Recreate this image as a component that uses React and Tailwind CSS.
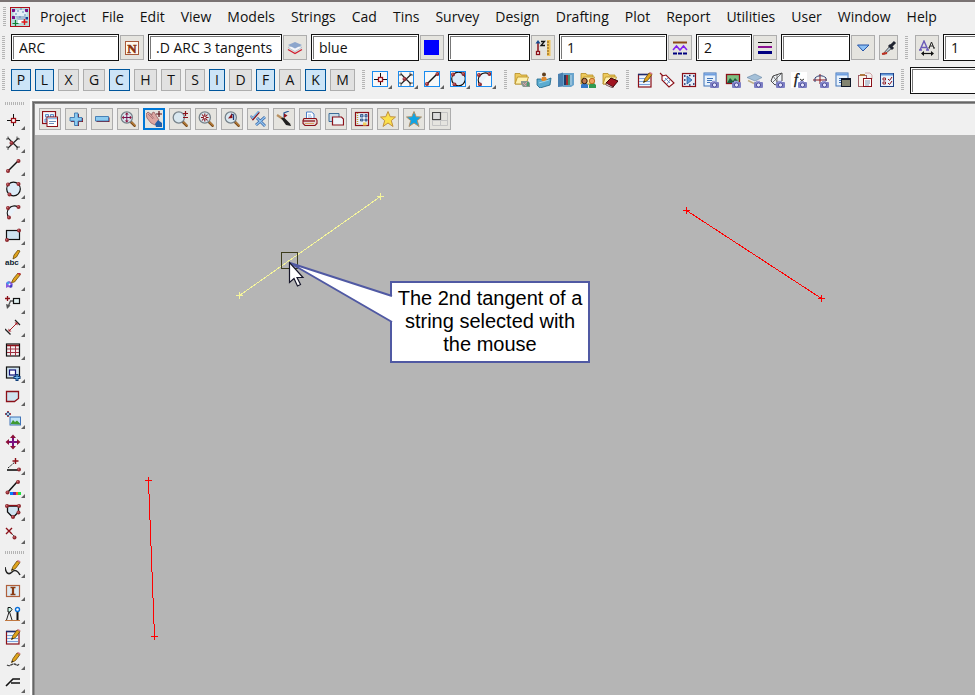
import clsx from 'clsx'

const MENUS = [
  'Project', 'File', 'Edit', 'View', 'Models', 'Strings', 'Cad', 'Tins', 'Survey',
  'Design', 'Drafting', 'Plot', 'Report', 'Utilities', 'User', 'Window', 'Help',
]

const SNAPS = [
  { key: 'P', width: 'w-5', on: true },
  { key: 'L', width: 'w-[19px]', on: true },
  { key: 'X', width: 'w-[21px]' },
  { key: 'G', width: 'w-[22px]' },
  { key: 'C', width: 'w-[21px]', on: true },
  { key: 'H', width: 'w-[23px]' },
  { key: 'T', width: 'w-5' },
  { key: 'S', width: 'w-5' },
  { key: 'I', width: 'w-4', on: true },
  { key: 'D', width: 'w-[23px]' },
  { key: 'F', width: 'w-[19px]', on: true },
  { key: 'A', width: 'w-[22px]' },
  { key: 'K', width: 'w-[21px]', on: true },
  { key: 'M', width: 'w-[25px]' },
]

const RED = '#8b1018'
const PALE = '#cfe3f0'

const Ball = ({ x, y }) => (
  <>
    <circle cx={x} cy={y} r="2" fill="#8e2a30" />
    <circle cx={x - 0.4} cy={y - 0.4} r="0.8" fill="#d07078" />
  </>
)

const Pencil = () => (
  <>
    <path d="M6.5 10.5 8 6.5 12 1l3 1.5-4.5 6z" fill="#e0a31c" stroke="#6b4a08" strokeWidth=".8" />
    <path d="m12 .8 1-.8 2.5 1.2-.6 1.6z" fill="#d77a86" />
    <path d="m6.5 10.5.5-2 1.5 1z" fill="#222" />
  </>
)

const Camera = () => (
  <>
    <rect x="7" y="10" width="9" height="6" rx="1" fill="#7d7fc4" />
    <rect x="9" y="8.8" width="4" height="2" fill="#9a9cd8" />
    <circle cx="11.5" cy="13" r="2.1" fill="#e8e8ff" stroke="#4b4c98" />
  </>
)

const Lens = () => (
  <>
    <path d="m10.5 10.5 5 5" stroke="#7a4a18" strokeWidth="2.6" />
    <path d="m11 10.5 4.5 4.5" stroke="#e0a050" strokeWidth="1" />
    <circle cx="6.8" cy="6.5" r="5.6" fill="#d9e8f0" stroke="#77838b" strokeWidth="1.3" />
  </>
)

const Folder = () => (
  <>
    <path d="M1 1.5h5l1 1.5h6v9H1z" fill="#edc95c" stroke="#b58d22" strokeWidth=".8" />
    <path d="m1 12 2.500-7h11L12 12z" fill="#fdf0b0" stroke="#b58d22" strokeWidth=".8" />
  </>
)

const Page = () => (
  <>
    <rect x="1" y="1" width="12" height="13" fill="#e8f2fc" stroke="#3f73b8" />
    <path d="M1 2.500h12" stroke="#6f9fe0" strokeWidth="2" />
    <path d="M4 6.500h6M4 8.500h5M4 10.500h3" stroke="#3f73b8" />
  </>
)

const point = (
  <>
    <path d="M8.500 2v12M2 8.500h13" stroke="#111" />
    <rect x="6.500" y="6.500" width="4" height="4" fill="#fff" stroke="#a01018" strokeWidth="1.300" />
  </>
)
const cross = (
  <>
    <path d="m3 3 10 10M13.500 3 3 13" stroke="#222" strokeWidth="1.200" />
    <path d="M1 4h2V1.500M12 1.500V4h3M12 15v-3h3M1 12h2v3" fill="none" stroke="#444" strokeWidth=".9" />
    <Ball x={6.500} y={8} />
  </>
)
const line = (
  <>
    <path d="m3 13 10-10" stroke="#111" strokeWidth="1.500" />
    <Ball x={3} y={13} />
    <Ball x={13.500} y={3} />
  </>
)
const circle = (
  <>
    <circle cx="8.500" cy="8" r="6.800" fill="#dcebf7" stroke="#111" strokeWidth="1.200" />
    <Ball x={3} y={3.500} />
    <Ball x={13.500} y={3} />
    <Ball x={4.500} y={13.500} />
  </>
)
const arc = (
  <>
    <path d="M4 13.500A7 7 0 0 1 13 3z" fill="#eaf2fa" />
    <path d="M4 13.500A7 7 0 0 1 13 3" fill="none" stroke="#111" strokeWidth="1.300" />
    <Ball x={3} y={4} />
    <Ball x={13.500} y={3} />
    <Ball x={4} y={13.500} />
  </>
)
const notepad = (
  <>
    <rect x="1.500" y="2.500" width="12.500" height="12.500" fill="#eef5fd" stroke={RED} strokeWidth="1.200" />
    <path d="M1 2.500h13" stroke="#1c2c6c" strokeWidth="1.500" />
    <path d="M2 6.500h11M2 9.500h11M2 12.500h11" stroke="#7ba4dc" />
    <Pencil />
  </>
)

const ICONS = {
  point,
  cross,
  line,
  circle,
  arc,
  notepad,
  rect: (
    <>
      <rect x="1.500" y="3.500" width="13" height="9" fill={PALE} stroke="#111" strokeWidth="1.200" />
      <Ball x={14} y={3.500} />
      <Ball x={2} y={13} />
    </>
  ),
  abc: (
    <>
      <path d="m8 9 1-4 4-5 2 1-3.500 6z" fill="#e0a31c" stroke="#6b4a08" strokeWidth=".8" />
      <text x="0" y="15" fontSize="8" fontWeight="700" fontFamily="Liberation Sans, sans-serif" fill="#0e1c30">abc</text>
    </>
  ),
  paint: (
    <>
      <path d="m1 10 3-2 2 1 2 2-2 4-3-1-2 1z" fill="#8a5ae0" />
      <circle cx="3" cy="10" r="1.500" fill="#3fa0e8" />
      <circle cx="6" cy="13" r="1.500" fill="#4040c0" />
      <circle cx="4.500" cy="11.500" r="1" fill="#fff" />
      <path d="m6.500 9.500 2-4L13 0l2.500 1.500L9.500 9z" fill="#e0a31c" stroke="#6b4a08" strokeWidth=".8" />
      <path d="m13 0 2.500 1.500" stroke="#c03040" strokeWidth="2" />
    </>
  ),
  leader: (
    <>
      <path d="M2.500 0v5M0 2.500h5" stroke={RED} strokeWidth="1.300" />
      <path d="M8 5H5.500L3 11" fill="none" stroke="#555" strokeWidth="1.300" />
      <path d="m2 13-1-5 4.500 1.500z" fill="#555" />
      <rect x="8.500" y="2.500" width="6" height="5" fill="#dff0f0" stroke="#111" strokeWidth="1.200" />
    </>
  ),
  dimension: (
    <>
      <path d="m0 10 5.500 5.500M10 1l5 5" stroke="#222" strokeWidth="1.300" />
      <path d="m4 12 8-8" stroke="#a82028" />
      <path d="M3.500 12.500V9.500l3 3zM12.500 3.500v3l-3-3z" fill="#a82028" />
    </>
  ),
  table: (
    <>
      <rect x="1.500" y="2" width="13" height="12" fill="#f4eef0" stroke="#111" strokeWidth="1.200" />
      <path d="M2 3.500h12" stroke={RED} strokeWidth="1.500" />
      <path d="M2 7h12M2 10.500h12M5.500 4v10M10.500 4v10" stroke="#a03040" />
    </>
  ),
  windowPlus: (
    <>
      <rect x="1.500" y="2" width="13" height="11" fill={PALE} stroke="#111" strokeWidth="1.200" />
      <rect x="4.500" y="5" width="6" height="5" fill="#fff" stroke="#141478" strokeWidth="1.200" />
      <path d="M12 9v7M8.500 12.500h7" stroke="#0c3c78" strokeWidth="3" />
      <path d="M12 10v5M9.500 12.500h5" stroke="#7cc0f0" />
    </>
  ),
  polygon: <path d="M1.500 3.500h12v7l-4 3h-8z" fill={PALE} stroke={RED} strokeWidth="1.300" />,
  image: (
    <>
      <path d="M3 0v6M0 3h6" stroke={RED} strokeWidth="1.500" />
      <circle cx="3" cy="3" r="1.500" fill="#fff" stroke="#1c4c88" />
      <rect x="5" y="6" width="10.500" height="8" fill="#bfe2f8" stroke="#3f73b8" />
      <path d="m5.500 13 2.500-4 2 2 2-1.500 3 3v1z" fill="#3f9a30" />
    </>
  ),
  move: (
    <>
      <path d="M8 2v12M2 8h12" stroke="#7a1080" strokeWidth="2" />
      <path d="m8 .5 3 3.500H5zM8 15.500l3-3.500H5zM.5 8l3.500-3v6zM15.500 8l-3.500-3v6z" fill="#8b1038" />
    </>
  ),
  angle: (
    <>
      <path d="M2 13h11" stroke="#111" strokeWidth="1.600" />
      <path d="m3 11 7-6" stroke="#222" strokeDasharray="2 1" />
      <path d="M10.500 1v6M7.500 4h6" stroke={RED} strokeWidth="1.400" />
      <Ball x={14} y={12.500} />
    </>
  ),
  colourLine: (
    <>
      <path d="m3 12 9-10" stroke="#111" strokeWidth="1.500" />
      <Ball x={2.500} y={12.500} />
      <Ball x={13} y={2} />
      <rect x="5" y="12" width="3" height="3" fill="#0080ff" />
      <rect x="8" y="12" width="3" height="3" fill="#7020a0" />
      <rect x="11" y="12" width="2" height="3" fill="#ff6020" />
      <rect x="13" y="12" width="3" height="3" fill="#20e040" />
    </>
  ),
  shield: (
    <>
      <path d="M2.500 3h11v6l-5 5h-1l-5-5z" fill={PALE} stroke="#111" strokeWidth="1.300" />
      <path d="M2 2.500h12" stroke={RED} strokeWidth="1.300" />
      <Ball x={2} y={3} />
      <Ball x={14} y={3} />
      <Ball x={8} y={14} />
      <Ball x={13.500} y={9.500} />
    </>
  ),
  erase: (
    <>
      <path d="m1 2 6 6M7 2 1 8" stroke={RED} strokeWidth="1.400" />
      <path d="m7 8 2 2" stroke="#555" />
      <Ball x={9.500} y={11.500} />
    </>
  ),
  freehand: (
    <>
      <path d="M0 7c1 7 4 8 7 5s6-1 8 3" fill="none" stroke="#222" strokeWidth="1.500" />
      <Pencil />
    </>
  ),
  ibeam: (
    <>
      <rect x="1.500" y="2.500" width="13" height="11" fill="#dceaf2" stroke="#b0603c" strokeWidth="1.200" />
      <path d="M5.500 4.500h5M5.500 11.500h5" stroke="#8a3c14" strokeWidth="1.500" />
      <path d="M8 4v8" stroke="#8a3c14" strokeWidth="2.200" />
    </>
  ),
  survey: (
    <>
      <path d="M3 1.500h2.500L7 3.500 5 6H3z" fill="#cfe" stroke="#111" />
      <path d="M4 6 1.500 14M4.500 6 7 14" stroke="#222" />
      <path d="M12.500 5v9" stroke="#111" strokeWidth="2" />
      <circle cx="12.500" cy="3.500" r="2" fill="#fff" stroke="#0a70d8" strokeWidth="1.400" />
      <path d="M0 14.500h15" stroke="#c07840" />
    </>
  ),
  pencilWave: (
    <>
      <path d="M2 13c3 2 4-1 7-1s3 3 5 0" fill="none" stroke="#444" strokeWidth="1.300" strokeDasharray="3 .5" />
      <Pencil />
    </>
  ),
  leaderLine: <path d="M15 4H8l-7 7M6 8h9" fill="none" stroke="#111" strokeWidth="1.600" />,
  northN: (
    <>
      <rect x="1.500" y="1.500" width="13" height="13" fill="#fff8ec" stroke="#a85a3c" />
      <text x="8" y="12.500" textAnchor="middle" fontSize="13" fontWeight="700" fontFamily="Liberation Serif, serif" fill="#8a3410" stroke="#8a3410" strokeWidth=".5">N</text>
    </>
  ),
  layers: (
    <>
      <path d="m1 9.500 7 4 7-4" fill="none" stroke="#d02030" strokeWidth="1.400" />
      <path d="m1 7.500 7-3 7 3-7 4z" fill="#f4f6fa" stroke="#a0aec0" strokeWidth=".6" />
      <path d="m1 5 7-3 7 3-7 3.500z" fill="#8ca6cc" />
    </>
  ),
  swatch: <path d="M0 0h15v15H0z" fill="#0000fe" />,
  zLevel: (
    <>
      <path d="M3 2v9" stroke="#8b1018" strokeWidth="1.500" />
      <path d="m3 0 2.500 3.500h-5z" fill="#14488c" />
      <rect x="1.500" y="11.500" width="3" height="3" fill="#fff" stroke={RED} strokeWidth="1.300" />
      <path d="M6 1.500h3.500l-3.500 4h4" fill="none" stroke="#111" strokeWidth="1.300" />
      <rect x="12" y="0" width="3.500" height="16" fill="#f0c25a" />
      <path d="M12 2h2M12 5h2M12 8h2M12 11h2M12 14h2" stroke="#7a5210" />
    </>
  ),
  lineStyle: (
    <>
      <path d="M1 2.500h14" stroke="#8a4a14" strokeWidth="2" />
      <path d="m1 10 3.500-4L8 10l3.500-4L15 10" fill="none" stroke="#8020f0" strokeWidth="1.500" />
      <path d="M1 13.500h14" stroke="#000080" strokeWidth="2" strokeDasharray="4 1" />
    </>
  ),
  weight: (
    <>
      <path d="M1 2.500h14" stroke="#111" />
      <path d="M1 7h14" stroke="#8a1090" strokeWidth="2" />
      <path d="M1 12.500h14" stroke="#000080" strokeWidth="3" />
    </>
  ),
  down: <path d="M2.500 5h11.500L8 11z" fill="#8cc0f4" stroke="#2454a8" />,
  dropper: (
    <>
      <path d="M2 14 9 6l2 2-7 6z" fill="#b8c8d4" stroke="#333" strokeWidth=".8" />
      <path d="m8 5 4 4M9.500 6.500 14 2" stroke="#202430" strokeWidth="3" />
      <path d="m1 14 5-1" stroke="#c03020" strokeWidth="2" />
    </>
  ),
  textSize: (
    <>
      <path d="M1 10 5 1l4 9M2.500 7.500h5M0 10h3M7 10h3" fill="none" stroke="#6a5ab8" strokeWidth="1.400" />
      <path d="m10 8 2.500-6L15 8M11 6h3M9.500 8h1.500M14 8h2" fill="none" stroke="#222" />
      <path d="M4 13.500h9" stroke="#111" strokeWidth="1.200" />
      <path d="m2 13.500 3-2.500v5zM15 13.500 12 11v5z" fill="#111" />
    </>
  ),
  folderRecycle: (
    <>
      <Folder />
      <path d="M7 9h7l2 2v4H9l-2-3z" fill="#8a9890" />
      <path d="m9 11 3 3M13 10l-3 3" stroke="#e0a0a8" />
      <path d="M14 10v4" stroke="#3c9a60" strokeWidth="1.500" />
    </>
  ),
  userBox: (
    <>
      <path d="M1 7h4l2 2 8-3-1 7-10 3-3-3z" fill="#5cacd0" stroke="#1c6488" strokeWidth=".8" />
      <circle cx="8" cy="2.500" r="2" fill="#604020" />
      <path d="M6 5h4l1 3-3 2-3-2z" fill="#e08a30" />
      <path d="m3 11 10-3" stroke="#a0d8ec" />
    </>
  ),
  book: (
    <>
      <path d="m0 2 5-1.500v14L0 15z" fill="#4a80b0" />
      <path d="M5 1h11v12l-3 2H5z" fill="#6aa4cc" />
      <path d="M7 3v10" stroke="#1c3c68" strokeWidth="2" />
      <path d="M9 3v10" stroke="#a02c30" strokeWidth="2" />
      <path d="M11 3v10" stroke="#409070" strokeWidth="2" />
      <path d="M13 3v10" stroke="#a0c8e0" strokeWidth="1.500" />
    </>
  ),
  folderUsers: (
    <>
      <Folder />
      <path d="M1 16v-3l2-2h3l2 2v3z" fill="#3478c8" />
      <path d="M9 16v-3l2-2h3l2 2v3z" fill="#309a50" />
      <circle cx="4.500" cy="9" r="2.700" fill="#c07850" stroke="#301808" />
      <circle cx="12" cy="9" r="2.700" fill="#f0a060" stroke="#c07020" />
    </>
  ),
  folderBook: (
    <>
      <Folder />
      <path d="m4 11 5-5 7 3-5 6z" fill="#a01420" stroke="#400408" />
      <path d="m4 11 7 4v1L4 13z" fill="#f8f0f0" stroke="#400408" strokeWidth=".6" />
    </>
  ),
  tag: (
    <>
      <path d="m1 1 3 3M3 4l4-1 8 8-5 4-7-7z" fill="#fff" stroke={RED} strokeWidth="1.100" />
      <path d="m6 6 5 5M9 6l-4 3M11 8l-3 4" stroke="#5c84c0" strokeWidth=".9" />
    </>
  ),
  playGrid: (
    <>
      <rect x="1.500" y="1.500" width="13" height="13" fill="#e6f0fa" stroke={RED} strokeWidth="1.200" />
      <path d="M6 4v8l5-4z" fill="#5f9ad8" stroke="#1c4c90" strokeWidth=".7" />
      <path d="M3 4h1.500M3 8h1.500M3 12h1.500M12 4h1.500M12 12h1.500M8 13h1.500M8 3.500h1.500" stroke="#102060" strokeWidth="1.500" />
    </>
  ),
  pageShot: (
    <>
      <Page />
      <Camera />
    </>
  ),
  imageShot: (
    <>
      <rect x="1.500" y="2.500" width="13" height="9" fill="#7cc080" stroke={RED} strokeWidth="1.300" />
      <path d="m2 11 3-5 3 3 2-3 3 3v2z" fill="#1c5c40" />
      <Camera />
    </>
  ),
  layerShot: (
    <>
      <path d="m0 5.500 8-3.500 7 3.500L8 9z" fill="#a4c0d8" stroke="#6484a4" strokeWidth=".6" />
      <path d="m1 8.500 6 3" stroke="#c0b088" strokeWidth="1.500" />
      <Camera />
    </>
  ),
  meshShot: (
    <>
      <path d="m2 9 2-5 9-3v8l-7 4z" fill="#f0f4f8" stroke="#333" strokeWidth=".9" />
      <path d="m4 4 5 7M13 1 3 11M8 2v9" stroke="#555" strokeWidth=".8" />
      <Camera />
    </>
  ),
  fxShot: (
    <>
      <path d="M0 0h16v16H0z" fill="#fff" />
      <text x="3" y="12" fontSize="14" fontStyle="italic" fontFamily="Liberation Serif, serif" fill="#111" stroke="#111" strokeWidth=".4">f</text>
      <path d="m9 7 4 3M13 7l-3 2" stroke="#333" />
      <Camera />
    </>
  ),
  sectionShot: (
    <>
      <path d="M0 8h14M7 2v10" stroke={RED} />
      <path d="M2 10V6c3-3 8-3 11 0v3" fill="none" stroke="#2c3c70" />
      <Camera />
    </>
  ),
  pageList: (
    <>
      <Page />
      <path d="M6 6h10v9H6z" fill="#101828" />
      <path d="M7 9h8M7 11h8M7 13h8" stroke="#f4f0b8" />
    </>
  ),
  pages: (
    <>
      <rect x="1.500" y="3.500" width="8" height="11" fill="#faf2ea" stroke="#a06068" />
      <path d="M8 1h5l2 2v4" fill="none" stroke="#d0a8a8" />
      <rect x="6.500" y="6.500" width="8" height="8" fill="#fff" stroke={RED} />
      <path d="M8 9h5M8 11h5M8 13h4" stroke="#8098b0" />
      <path d="M3 3h5" stroke="#b07840" strokeWidth="2" />
    </>
  ),
  checklist: (
    <>
      <rect x="1.500" y="1.500" width="13" height="13" fill="#e8f2fc" stroke="#1c3c80" />
      <path d="M2 2.500h12" stroke="#5f95d8" strokeWidth="2" />
      <path d="M4 6h2.500v2H4zM4 10h2.500v2H4z" fill="#fff" stroke={RED} strokeWidth=".9" />
      <path d="m9 7 1.500 1.500L13 5M9 11l1.500 1.500L13 9" fill="none" stroke={RED} />
    </>
  ),
  windows: (
    <>
      <rect x=".5" y=".5" width="13" height="12" fill="#f4f8fc" stroke={RED} strokeWidth="1.200" />
      <path d="M3.500 3.500h3v2.500h-3zM8.500 3.500h3v2.500h-3zM3 8h2v3H3z" fill="#d4e6f8" stroke="#4c84c4" strokeWidth=".9" />
      <rect x="5" y="6" width="10.500" height="9.500" fill="#fff" stroke={RED} />
      <path d="M5.500 7.500h9.500" stroke="#90c0ec" strokeWidth="1.500" />
      <path d="M7 10.500h7M7 12.500h5" stroke="#6c90bc" />
    </>
  ),
  plus: (
    <>
      <path d="M7 3h4v4h4v4h-4v4H7v-4H3V7h4z" fill={RED} />
      <path d="M6.500 2h3.500v4.500h4v3.500h-4v4.500H6.500V10H2V6.500h4.500z" fill="#8ccbf0" stroke="#3c78b0" strokeWidth=".9" />
    </>
  ),
  minus: (
    <>
      <path d="M2.500 6.500h13V11h-13z" fill={RED} />
      <path d="M1.500 5.500h13V10h-13z" fill="#8ccbf0" stroke="#3c78b0" strokeWidth=".9" />
    </>
  ),
  zoomExtents: (
    <>
      <Lens />
      <path d="M6.800 3v7M3.300 6.500h7" stroke="#7a1050" />
      <path d="m6.800 1.500 2 2h-4zM6.800 11.500l2-2h-4zM1.800 6.500l2-2v4zM11.800 6.500l-2-2v4z" fill="#8b1038" />
    </>
  ),
  pan: (
    <>
      <path d="M0 3 2 1l4 3 0-2 2-1 3 5 2 3-4 5-4-2-4-5z" fill="#dca6a2" stroke="#8a5458" strokeWidth=".7" />
      <path d="m2 3 5 5M4 2.500l4 5" stroke="#9a6468" strokeWidth=".7" />
      <path d="m9 13 3-4 4 3v4h-6z" fill="#2460a8" />
      <path d="M13 0v6M10 3h6" stroke="#5c1018" strokeWidth="1.200" />
    </>
  ),
  zoomInOut: (
    <>
      <Lens />
      <path d="M11 2.500h5M13.500 0v5M11 6.500h5" stroke={RED} strokeWidth="1.200" />
    </>
  ),
  zoomShrink: (
    <>
      <Lens />
      <path d="m4 3.500 5.500 6M9.500 3.500l-5.500 6M6.800 2.500v8M3 6.500h7.500" stroke={RED} strokeWidth="1.100" />
      <circle cx="6.800" cy="6.500" r="1" fill="#fff" />
    </>
  ),
  zoomPrev: (
    <>
      <Lens />
      <path d="M9.500 9V4L7 3" fill="none" stroke="#1c3c78" strokeWidth="1.300" />
      <path d="m4 7.500 4-5 .5 4.500z" fill={RED} />
    </>
  ),
  checks: (
    <>
      <path d="m1 5 2 3 6-7" fill="none" stroke={RED} strokeWidth="2.200" />
      <path d="m.5 4.500 2 2.500L9 0" fill="none" stroke="#7ab4e4" strokeWidth="1.600" />
      <path d="m7 7 8 8M15 6 6 14" stroke="#3460a0" strokeWidth="2.800" />
      <path d="m7 7 8 8M15 6 6 14" stroke="#90c4f0" strokeWidth="1.400" />
    </>
  ),
  brush: (
    <>
      <path d="m1 4 6 4" stroke="#b89060" strokeWidth="2.200" />
      <path d="m5 7 3-.5 6 6L15 15l-5-1z" fill="#202020" />
      <path d="M8 6V2l5-2" fill="none" stroke="#2c5c98" strokeWidth="1.200" />
      <path d="M8 7V2.500l3.500 2z" fill={RED} />
    </>
  ),
  print: (
    <>
      <path d="M4.500 1h5l2.500 2v5H4.500z" fill="#fff" stroke="#4c80c8" />
      <path d="M6 4h3M6 6h4" stroke="#8ab8e8" />
      <path d="M2 7.500h12l1 2v3l-2 2H3l-2-2v-3z" fill="#e4d8d4" stroke={RED} strokeWidth="1.100" />
      <path d="M1 10h12" stroke={RED} strokeWidth="1.300" />
      <path d="M3 12.500h9" stroke="#d8a060" />
    </>
  ),
  copyView: (
    <>
      <path d="M1 2.500h10v8H1z" fill="#c8dce8" stroke="#3c6c98" />
      <path d="M4.500 6h9l2 2v6h-11z" fill="#eef4f8" stroke={RED} strokeWidth="1.200" />
    </>
  ),
  grid: (
    <>
      <rect x="1.500" y="1.500" width="13" height="13" fill="#e4eef8" stroke={RED} strokeWidth="1.200" />
      <path d="M3.500 2v12" stroke="#c8a030" strokeWidth="1.500" strokeDasharray="1 1" />
      <path d="M6.500 3.500H9V6H6.500zM11 3.500h2V6h-2zM6.500 8H9v2H6.500zM11 8h2v2h-2z" fill="#7ca4d0" stroke="#1c3c70" strokeWidth=".7" />
      <path d="M9 11.500h3.500v3H9z" fill="#f0d060" />
    </>
  ),
  starYellow: (
    <path d="m8 .5 2.200 5.200 5.300.300-4.200 3.600 1.700 5.900L8 12l-5 3.500 1.700-5.900L.500 6l5.300-.300z" fill="#fbe04c" stroke="#c09040" />
  ),
  starBlue: (
    <path d="m8 .5 2.200 5.200 5.300.300-4.200 3.600 1.700 5.900L8 12l-5 3.500 1.700-5.900L.500 6l5.300-.300z" fill="#10a4e4" stroke="#b09068" />
  ),
  panes: (
    <>
      <path d="M.500 1.500h15v13H.500zM8.500 2v12M0 9.500h15" fill="none" stroke="#c4c4c4" />
      <path d="M.500 1.500h8v7h-8z" fill="#dcdcdc" stroke="#444" strokeWidth="1.200" />
    </>
  ),
}

const CAD_TOOLS = [
  'point', 'cross', 'line', 'circle', 'arc', 'rect', 'abc', 'paint', 'leader', 'dimension',
  'table', 'windowPlus', 'polygon', 'image', 'move', 'angle', 'colourLine', 'shield', 'erase',
]
const DRAFT_TOOLS = ['freehand', 'ibeam', 'survey', 'notepad', 'pencilWave', 'leaderLine']
const SNAP_TOOLS = ['point', 'cross', 'line', 'circle', 'arc']
const PROJECT_TOOLS = ['folderRecycle', 'userBox', 'book', 'folderUsers', 'folderBook']
const REPORT_TOOLS = [
  'notepad', 'tag', 'playGrid', 'pageShot', 'imageShot', 'layerShot',
  'meshShot', 'fxShot', 'sectionShot', 'pageList', 'pages', 'checklist',
]
const VIEW_TOOLS = [
  'windows', 'plus', 'minus', 'zoomExtents', 'pan', 'zoomInOut', 'zoomShrink', 'zoomPrev',
  'checks', 'brush', 'print', 'copyView', 'grid', 'starYellow', 'starBlue', 'panes',
]

const FIELDS = [
  { name: 'name', value: 'ARC', width: 'w-[108px]', icon: 'northN' },
  { name: 'model', value: '.D ARC 3 tangents', width: 'w-[134px]', icon: 'layers' },
  { name: 'colour', value: 'blue', width: 'w-[108px]', icon: 'swatch' },
  { name: 'height', value: '', width: 'w-[82px]', icon: 'zLevel' },
  { name: 'linestyle', value: '1', width: 'w-[108px]', icon: 'lineStyle' },
  { name: 'weight', value: '2', width: 'w-14', icon: 'weight' },
  { name: 'tinable', value: '', width: 'w-[69px]', icon: 'down' },
]

function Icon({ name }) {
  return (
    <svg className="block w-4 h-4 shrink-0" viewBox="0 0 16 16" aria-hidden="true">
      {ICONS[name]}
    </svg>
  )
}

function Corner() {
  return (
    <svg className="w-1 h-1 shrink-0" viewBox="0 0 4 4" aria-hidden="true">
      <path d="M4 0v4H0z" fill="#606060" />
    </svg>
  )
}

function Grip({ className }) {
  return (
    <div
      className={clsx(
        'w-[3px] shrink-0 bg-[repeating-linear-gradient(to_bottom,#b4b4b4_0_1px,transparent_1px_2px)]',
        className,
      )}
    />
  )
}

function GripFlat({ className }) {
  return (
    <div
      className={clsx(
        'h-[3px] w-5 ml-[5px] shrink-0 bg-[repeating-linear-gradient(to_right,#b4b4b4_0_1px,transparent_1px_2px)]',
        className,
      )}
    />
  )
}

function Field({ label, value, width }) {
  return (
    <div className={clsx('h-[27px] shrink-0 border border-[#111] bg-white p-px', width)}>
      <input
        aria-label={label}
        defaultValue={value}
        className="block w-full h-full border-t border-l border-[#777] bg-white pl-[5px] pb-0.5 outline-none"
      />
    </div>
  )
}

function IconButton({ icon, active, className }) {
  return (
    <button
      aria-label={icon}
      className={clsx(
        'flex items-center justify-center shrink-0 bg-[#e5e4df]',
        active ? 'border-2 border-[#0078d7]' : 'border border-[#adadad]',
        className,
      )}
    >
      <Icon name={icon} />
    </button>
  )
}

function DropTool({ icon, boxed }) {
  return (
    <button aria-label={icon} className={clsx('flex items-end shrink-0', !boxed && 'h-[23px] pb-px')}>
      <span className={clsx('mb-0.5', boxed && 'outline outline-[#1a8cf0] -outline-offset-1 bg-[#f8f8f8]')}>
        <Icon name={icon} />
      </span>
      <Corner />
    </button>
  )
}

function AppIcon() {
  return (
    <svg className="block w-5 h-5 shrink-0" viewBox="0 0 20 20" aria-hidden="true">
      <rect x=".5" y=".5" width="19" height="19" fill="#b8dcdc" stroke="#b01018" />
      <path d="M2 2h3v3H2zM15 2h3v3h-3zM2 9h3v3H2z" fill="#7a1088" />
      <path d="M6 3h8l3 4-2 4H6L3 7z" fill="#e4eef6" />
      <path d="M5 9h11l-2 4H8z" fill="#a4bcd4" />
      <path d="M7 4h2M12 5h2M5 7h2M14 8h2M9 10h2M10 2h2" stroke="#5c88b8" strokeWidth="1.200" />
      <path d="M8 13h5v3H8z" fill="#fff" />
      <path d="M5.500 13v6M2.500 16.500h6" stroke="#108030" strokeWidth="1.200" />
      <path d="M14.500 12v6M11.500 15h6" stroke="#e01818" strokeWidth="1.400" />
      <path d="M15.500 10h2.500v2.500h-2.500z" fill="#1c3c98" />
    </svg>
  )
}

function MenuBar() {
  return (
    <nav className="flex items-center h-[30px] pl-[3px]">
      <Grip className="h-5" />
      <div className="ml-1">
        <AppIcon />
      </div>
      <div className="flex gap-4 ml-2.5">
        {MENUS.map((m) => (
          <button key={m} className="leading-5">
            {m}
          </button>
        ))}
      </div>
    </nav>
  )
}

function AttributeBar() {
  return (
    <div className="flex items-center h-[31px] pl-0.5">
      <Grip className="h-6 mr-1.5" />
      {FIELDS.map((f) => (
        <div key={f.name} className="flex items-center gap-px mr-1">
          <Field label={f.name} value={f.value} width={f.width} />
          <IconButton icon={f.icon} className="w-6 h-[25px]" />
        </div>
      ))}
      <IconButton icon="dropper" className="w-[19px] h-[25px]" />
      <Grip className="h-6 mx-[7px]" />
      <IconButton icon="textSize" className="w-6 h-[25px] mr-1" />
      <Field label="text size" value="1" width="w-[108px]" />
    </div>
  )
}

function SnapBar() {
  return (
    <div className="flex items-center h-[34px] pl-0.5">
      <Grip className="h-[22px] mr-1.5" />
      <div className="flex gap-1 shrink-0">
        {SNAPS.map((s) => (
          <button
            key={s.key}
            aria-pressed={!!s.on}
            className={clsx(
              'h-[22px] shrink-0 border leading-5',
              s.width,
              s.on ? 'bg-[#cce4f7] border-[#00569c]' : 'bg-[#e1e1e1] border-[#adadad]',
            )}
          >
            {s.key}
          </button>
        ))}
      </div>
      <Grip className="h-5 mx-[7px]" />
      <div className="flex gap-1.5 shrink-0">
        {SNAP_TOOLS.map((t) => (
          <DropTool key={t} icon={t} boxed />
        ))}
      </div>
      <Grip className="h-5 ml-2 mr-[7px]" />
      <div className="flex gap-1.5 shrink-0">
        {PROJECT_TOOLS.map((t) => (
          <button key={t} aria-label={t}>
            <Icon name={t} />
          </button>
        ))}
      </div>
      <Grip className="h-5 mx-2" />
      <div className="flex gap-1.5 shrink-0">
        {REPORT_TOOLS.map((t) => (
          <button key={t} aria-label={t}>
            <Icon name={t} />
          </button>
        ))}
      </div>
      <Grip className="h-[22px] mx-1.5" />
      <Field label="command" value="" width="w-[108px]" />
    </div>
  )
}

function SideBar() {
  return (
    <aside className="w-[30px] shrink-0 pt-[5px]">
      <GripFlat className="mb-[3px]" />
      <div className="flex flex-col pl-[5px]">
        {CAD_TOOLS.map((t) => (
          <DropTool key={t} icon={t} />
        ))}
      </div>
      <GripFlat className="mt-1.5 mb-0.5" />
      <div className="flex flex-col pl-[5px]">
        {DRAFT_TOOLS.map((t) => (
          <DropTool key={t} icon={t} />
        ))}
      </div>
    </aside>
  )
}

// end-to-end segment with a small cross at each vertex
function StringLine({ from, to, color }) {
  const [x1, y1] = from
  const [x2, y2] = to
  return (
    <g stroke={color} shapeRendering="crispEdges">
      <path d={`M${x1} ${y1}L${x2} ${y2}`} />
      <path d={`M${x1 - 3.5} ${y1}h7M${x1} ${y1 - 3.5}v7M${x2 - 3.5} ${y2}h7M${x2} ${y2 - 3.5}v7`} />
    </g>
  )
}

function PlanView() {
  return (
    <div className="relative flex-1 bg-[#b5b5b5] overflow-hidden">
      <svg className="absolute inset-0 w-full h-full" fill="none">
        <StringLine from={[204.5, 160.5]} to={[345.5, 61.5]} color="#f4f49c" />
        <StringLine from={[651.5, 75.5]} to={[786.5, 163.5]} color="#ff0000" />
        <StringLine from={[113.5, 345.5]} to={[119.5, 501.5]} color="#ff0000" />
        <rect x="246.5" y="117.5" width="16" height="16" stroke="#3c3c1c" />
      </svg>
      <div className="absolute left-[355px] top-[146px] w-[200px] h-[82px] border-2 border-[#5059a3] bg-white py-1 text-center text-[20px] leading-[23px] text-black font-['Liberation_Sans',Arial,sans-serif]">
        The 2nd tangent of a string selected with the mouse
      </div>
      <svg className="absolute inset-0 w-full h-full" fill="none">
        <path d="M358 161.500 255 128l103 59.500" fill="#fff" />
        <path d="M357 161 255 128l102 59" stroke="#5059a3" strokeWidth="2" />
        <path
          d="M254.500 127.500v20l4.500-4 3.500 7.500 3-1.500-3.500-7h6z"
          fill="#fff"
          stroke="#16162a"
          strokeWidth="1.200"
        />
      </svg>
    </div>
  )
}

export default function App() {
  return (
    <div className="flex flex-col min-h-screen overflow-hidden bg-[#f0f0f0] text-[14px] text-[#111] font-['Open_Sans','Noto_Sans',sans-serif]">
      <div className="h-0.5 bg-[#7a7373]" />
      <MenuBar />
      <AttributeBar />
      <SnapBar />
      <div className="flex flex-1">
        <SideBar />
        <main className="flex flex-1 min-w-0 mt-0.5 border-t-2 border-l-2 border-white">
          <div className="flex flex-1 min-w-0 border-t border-l border-[#8f8f8f]">
            <div className="flex flex-1 min-w-0 border-t border-l border-[#666]">
              <div className="flex flex-col flex-1 min-w-0 border-t border-l border-[#8f8f8f]">
                <div className="flex items-center gap-1 h-[31px] pl-1 pb-px">
                  {VIEW_TOOLS.map((t) => (
                    <IconButton key={t} icon={t} active={t === 'pan'} className="w-[22px] h-[22px]" />
                  ))}
                </div>
                <PlanView />
              </div>
            </div>
          </div>
        </main>
      </div>
    </div>
  )
}
